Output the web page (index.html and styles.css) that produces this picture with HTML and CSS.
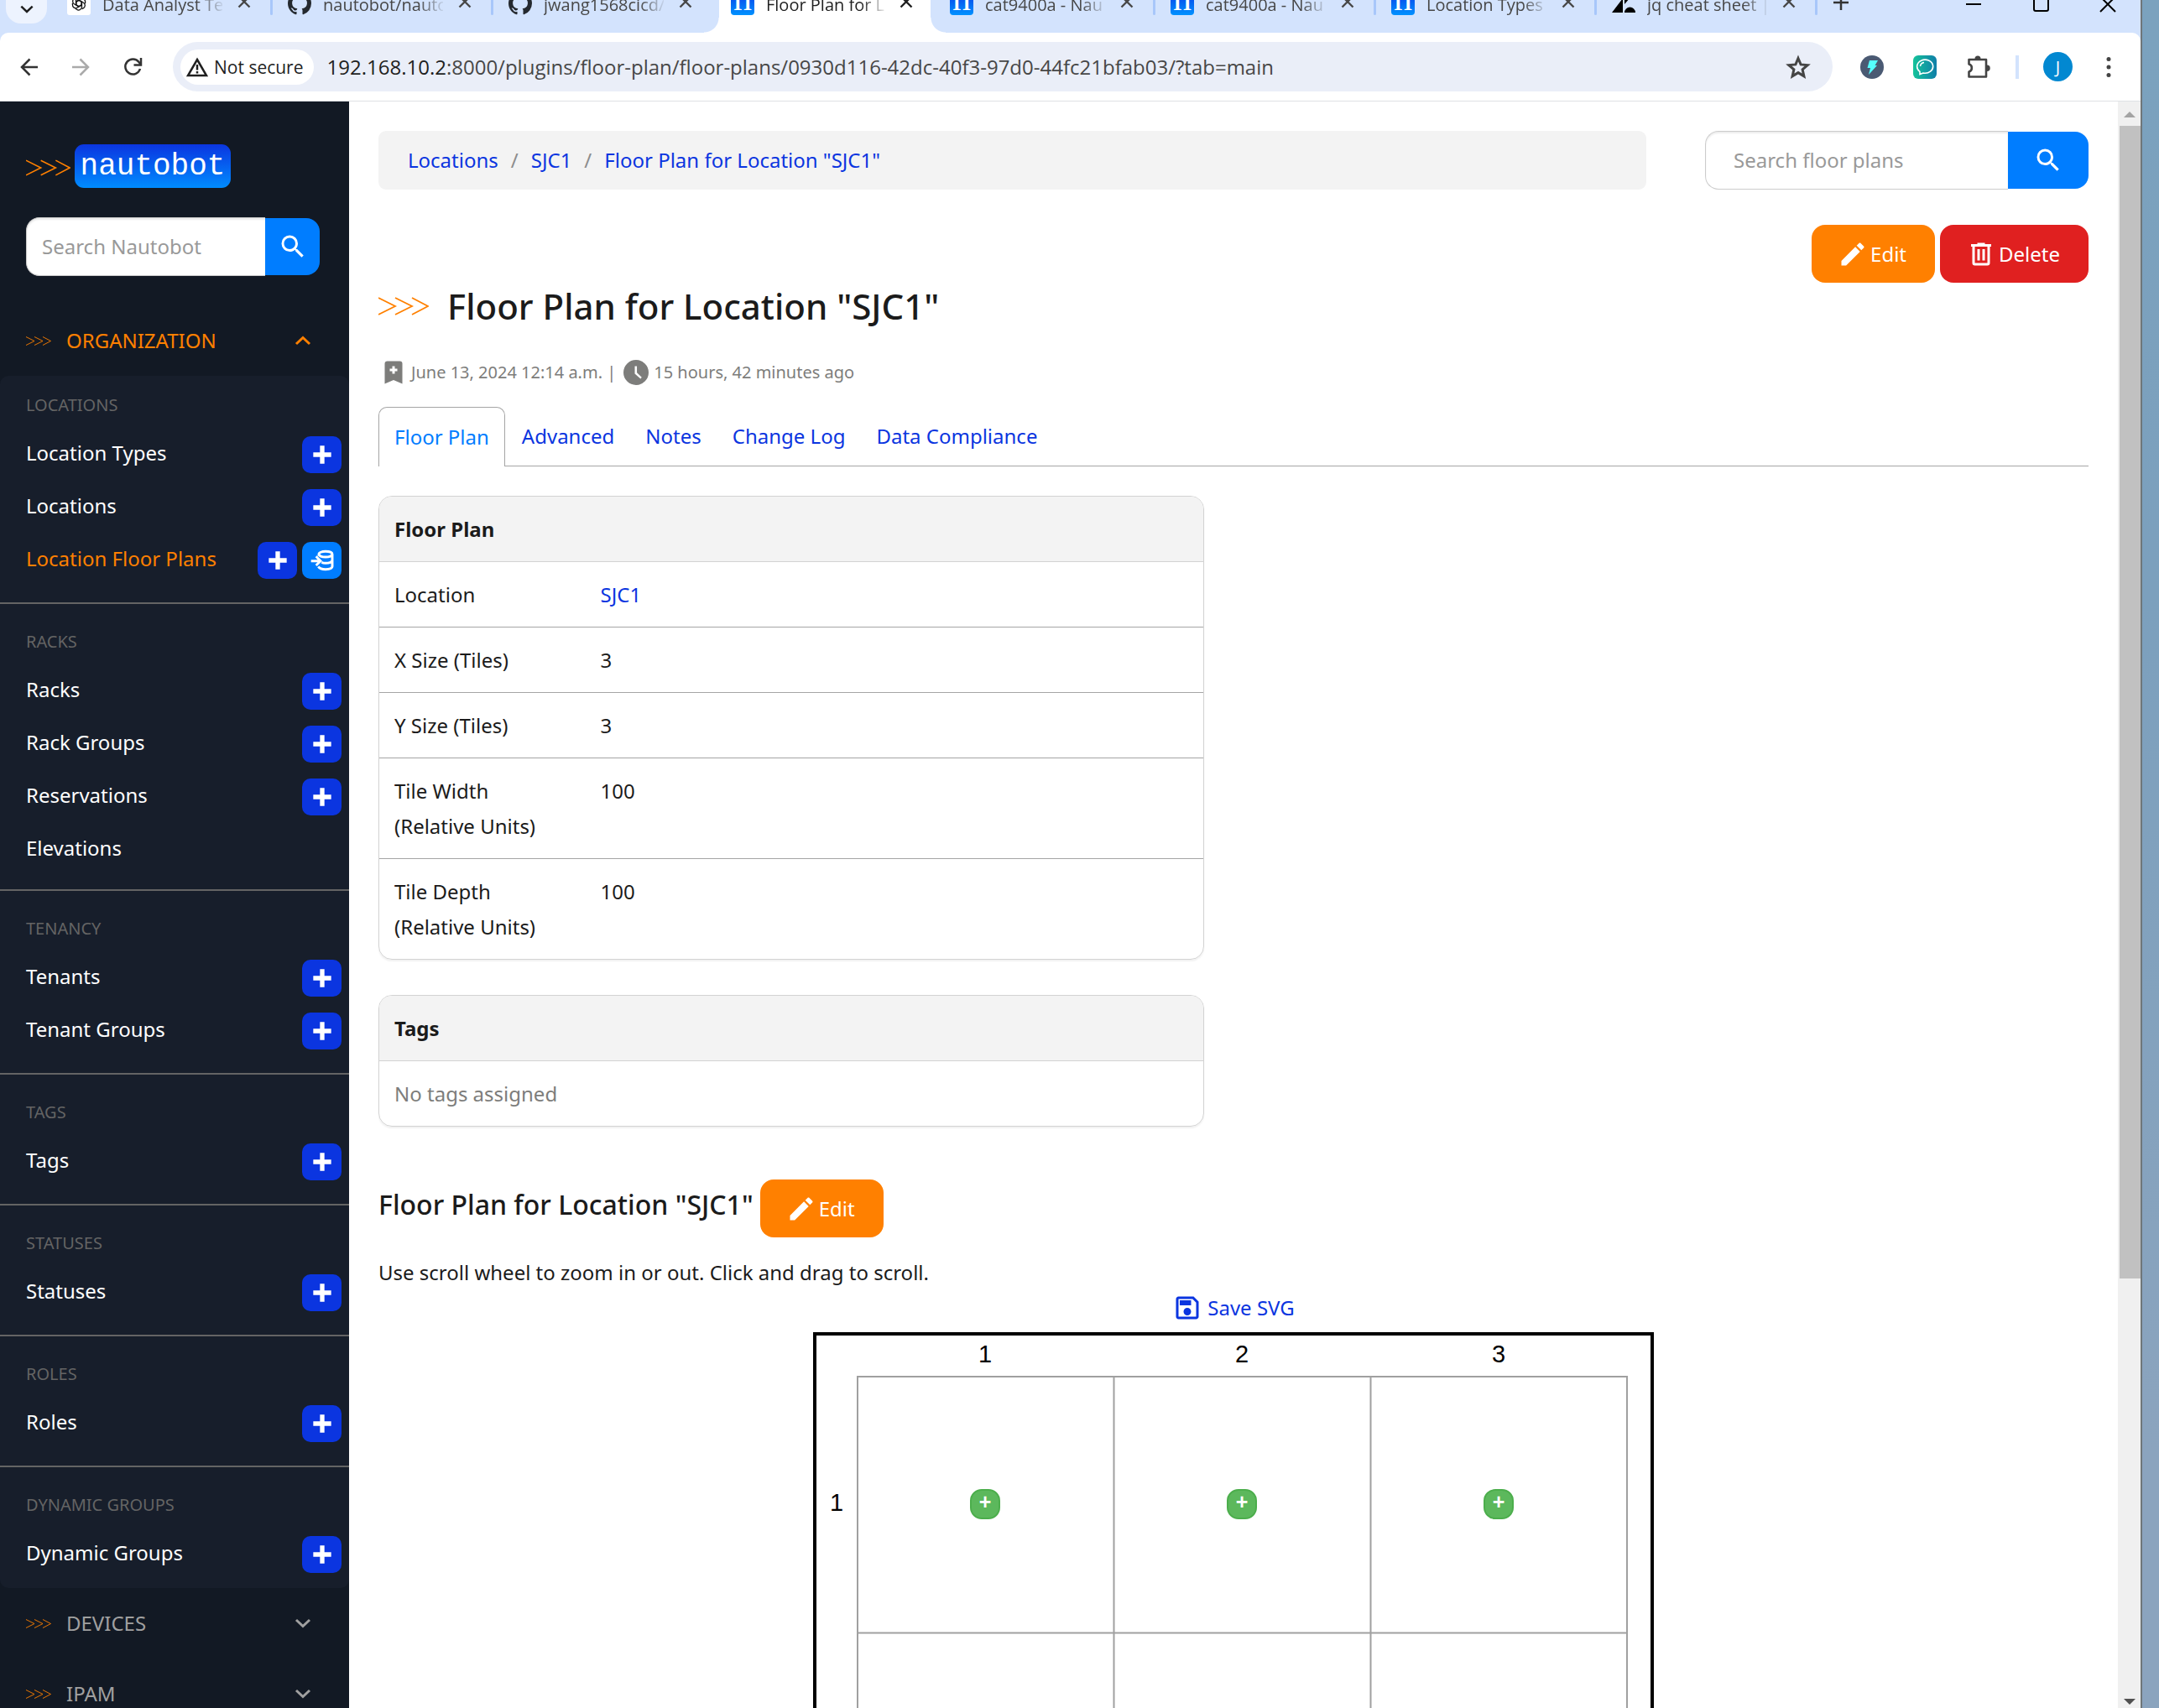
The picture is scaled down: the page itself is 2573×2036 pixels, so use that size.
FILE: index.html
```html
<!DOCTYPE html>
<html lang="en">
<head>
<meta charset="utf-8">
<title>Floor Plan for Location "SJC1" - Nautobot</title>
<meta name="viewport" content="width=device-width, initial-scale=1">
<link rel="stylesheet" href="styles.css">
</head>
<body>
<svg class="sprite" aria-hidden="true">
  <symbol id="pencil" viewBox="0 0 24 24"><path d="M20.71,7.04C21.1,6.65 21.1,6 20.71,5.63L18.37,3.29C18,2.9 17.35,2.9 16.96,3.29L15.12,5.12L18.87,8.87M3,17.25V21H6.75L17.81,9.93L14.06,6.18L3,17.25Z"/></symbol>
  <symbol id="magnify" viewBox="0 0 24 24"><path d="M9.5,3A6.5,6.5 0 0,1 16,9.5C16,11.11 15.41,12.59 14.44,13.73L14.71,14H15.5L20.5,19L19,20.5L14,15.5V14.71L13.73,14.44C12.59,15.41 11.11,16 9.5,16A6.5,6.5 0 0,1 3,9.5A6.5,6.5 0 0,1 9.5,3M9.5,5C7,5 5,7 5,9.5C5,12 7,14 9.5,14C12,14 14,12 14,9.5C14,7 12,5 9.5,5Z"/></symbol>
  <symbol id="trash" viewBox="0 0 24 24"><path d="M9,3V4H4V6H5V19A2,2 0 0,0 7,21H17A2,2 0 0,0 19,19V6H20V4H15V3H9M7,6H17V19H7V6M9,8V17H11V8H9M13,8V17H15V8H13Z"/></symbol>
  <symbol id="plus" viewBox="0 0 24 24"><path d="M20 14H14V20H10V14H4V10H10V4H14V10H20V14Z"/></symbol>
  <symbol id="import" viewBox="0 0 24 24"><path fill="none" stroke="currentColor" stroke-width="2.200" d="M9 8V6.5C9 5 11.500 4 15 4S21 5 21 6.500V17.500C21 19 18.500 20 15 20S9.500 19 8.500 17.500M9 6.500C9.500 8 12 9 15 9S20.500 8 21 6.500M11.500 13.700C12.500 14.300 13.700 14.500 15 14.500C18 14.500 20.500 13.500 21 12M2 12.500H10M6.500 8.500L10.500 12.500L6.500 16.500"/></symbol>
  <symbol id="bookmark" viewBox="0 0 24 24"><path d="M17,3A2,2 0 0,1 19,5V21L12,18L5,21V5C5,3.89 5.9,3 7,3H17M11,7V9H9V11H11V13H13V11H15V9H13V7H11Z"/></symbol>
  <symbol id="clock" viewBox="0 0 24 24"><path d="M12,2A10,10 0 0,0 2,12A10,10 0 0,0 12,22A10,10 0 0,0 22,12A10,10 0 0,0 12,2M15.600,17L11,13V7H12.700V12.200L16.500,15.800L15.600,17Z"/></symbol>
  <symbol id="save" viewBox="0 0 24 24"><path d="M17 3H5C3.890 3 3 3.900 3 5V19C3 20.100 3.890 21 5 21H19C20.100 21 21 20.100 21 19V7L17 3M19 19H5V5H16.170L19 7.830V19M12 12C10.340 12 9 13.340 9 15S10.340 18 12 18 15 16.660 15 15 13.660 12 12 12M6 6H15V10H6V6Z"/></symbol>
  <symbol id="up" viewBox="0 0 24 24"><path fill="none" stroke="currentColor" stroke-width="3" d="M4 16L12 8.500L20 16"/></symbol>
  <symbol id="down" viewBox="0 0 24 24"><path fill="none" stroke="currentColor" stroke-width="3" d="M4 8L12 15.500L20 8"/></symbol>
  <symbol id="x" viewBox="0 0 16 16"><path fill="none" stroke="currentColor" stroke-width="2.400" d="M1.500 1.500L14.500 14.500M14.500 1.500L1.500 14.500"/></symbol>
  <symbol id="github" viewBox="0 0 16 16"><path d="M8 0C3.580 0 0 3.580 0 8c0 3.540 2.290 6.530 5.470 7.590.4.070.55-.17.55-.38 0-.19-.01-.82-.01-1.490-2.010.37-2.530-.49-2.690-.94-.09-.23-.48-.94-.82-1.130-.28-.15-.68-.52-.01-.53.63-.01 1.080.58 1.230.82.72 1.210 1.870.87 2.330.66.07-.52.28-.87.51-1.070-1.780-.2-3.640-.89-3.640-3.950 0-.87.31-1.590.82-2.150-.08-.2-.36-1.020.08-2.120 0 0 .67-.21 2.200.82.64-.18 1.320-.27 2-.27s1.360.09 2 .27c1.530-1.040 2.200-.82 2.200-.82.44 1.100.16 1.920.08 2.120.51.56.82 1.270.82 2.150 0 3.070-1.870 3.750-3.650 3.950.29.25.54.73.54 1.480 0 1.070-.01 1.930-.01 2.200 0 .21.15.46.55.38A8.010 8.010 0 0016 8c0-4.420-3.580-8-8-8z"/></symbol>
  <symbol id="knot" viewBox="0 0 28 28">
    <rect width="28" height="28" rx="3" fill="#fff"/>
    <g fill="none" stroke="#111" stroke-width="1.300">
      <g id="petal"><path d="M14 10.500L17.500 12.500V18A3.800 3.800 0 0 1 11.500 21.300L10 20.400"/></g>
      <use href="#petal" transform="rotate(60 14 14)"/><use href="#petal" transform="rotate(120 14 14)"/><use href="#petal" transform="rotate(180 14 14)"/><use href="#petal" transform="rotate(240 14 14)"/><use href="#petal" transform="rotate(300 14 14)"/>
    </g>
  </symbol>
  <symbol id="zendesk" viewBox="0 0 28 28"><path fill="#000" d="M13 8V25H0ZM13 0A6.500 6.500 0 0 1 0 0ZM15 25A6.500 6.500 0 0 1 28 25ZM15 15V0H28Z"/></symbol>
  <symbol id="arrows" viewBox="0 0 60 22"><path fill="none" stroke="#ff8000" stroke-width="1.800" d="M0 1L20 11L0 21M20 1L40 11L20 21M40 1L59 11L40 21"/></symbol>
</svg>

<div class="desktop">
<div class="window">
  <header class="strip">
    <button class="tab-search" aria-label="Search tabs"><svg class="i20"><use href="#down"/></svg></button>
    <div class="tabs">
      <div class="tab"><svg class="i28"><use href="#knot"/></svg><span class="tab-title">Data Analyst Te</span><button class="close" aria-label="Close"><svg class="i16"><use href="#x"/></svg></button></div>
      <div class="tab"><svg class="i28 gh"><use href="#github"/></svg><span class="tab-title">nautobot/nauto</span><button class="close" aria-label="Close"><svg class="i16"><use href="#x"/></svg></button></div>
      <div class="tab before-active"><svg class="i28 gh"><use href="#github"/></svg><span class="tab-title">jwang1568cicd/</span><button class="close" aria-label="Close"><svg class="i16"><use href="#x"/></svg></button></div>
      <div class="tab active"><span class="fav">n</span><span class="tab-title">Floor Plan for L</span><button class="close" aria-label="Close"><svg class="i16"><use href="#x"/></svg></button></div>
      <div class="tab"><span class="fav">n</span><span class="tab-title">cat9400a - Nau</span><button class="close" aria-label="Close"><svg class="i16"><use href="#x"/></svg></button></div>
      <div class="tab"><span class="fav">n</span><span class="tab-title">cat9400a - Nau</span><button class="close" aria-label="Close"><svg class="i16"><use href="#x"/></svg></button></div>
      <div class="tab"><span class="fav">n</span><span class="tab-title">Location Types</span><button class="close" aria-label="Close"><svg class="i16"><use href="#x"/></svg></button></div>
      <div class="tab"><svg class="i28"><use href="#zendesk"/></svg><span class="tab-title">jq cheat sheet |</span><button class="close" aria-label="Close"><svg class="i16"><use href="#x"/></svg></button></div>
    </div>
    <button class="new-tab" aria-label="New tab"><svg class="i20" viewBox="0 0 20 20"><path fill="none" stroke="#333" stroke-width="2.500" d="M10 1V19M1 10H19"/></svg></button>
    <div class="controls">
      <button aria-label="Minimize"><svg class="i20" viewBox="0 0 20 20"><path stroke="#000" stroke-width="2" d="M1 10H19"/></svg></button>
      <button aria-label="Maximize"><svg class="i20" viewBox="0 0 20 20"><rect x="2" y="1" width="17" height="17" rx="2" fill="none" stroke="#000" stroke-width="2"/></svg></button>
      <button aria-label="Close window"><svg class="i20" viewBox="0 0 20 20"><path stroke="#000" stroke-width="2" d="M1 1L19 19M19 1L1 19"/></svg></button>
    </div>
  </header>

  <div class="toolbar-wrap">
  <div class="toolbar">
    <button class="tool" aria-label="Back"><svg class="i24" viewBox="0 0 24 24"><path fill="none" stroke="#333" stroke-width="2.500" d="M22 12H3M12.500 2.500L3 12L12.500 21.500"/></svg></button>
    <button class="tool" aria-label="Forward" disabled><svg class="i24" viewBox="0 0 24 24"><path fill="none" stroke="#aaa" stroke-width="2.500" d="M1 12H20M10.500 2.500L20 12L10.500 21.500"/></svg></button>
    <button class="tool" aria-label="Reload"><svg class="i24" viewBox="0 0 24 24"><path fill="none" stroke="#333" stroke-width="2.500" d="M20 14A9 9 0 1 1 18.500 6L21 9M21 1V9.500H12.500"/></svg></button>
    <div class="address">
      <button class="secure"><svg class="i26" viewBox="0 0 26 26"><path fill="none" stroke="#1f1f1f" stroke-width="2.500" d="M13 4L24 23H2ZM13 10V16.500M13 18V20.500"/></svg>Not secure</button>
      <span class="url"><span class="host">192.168.10.2</span>:8000/plugins/floor-plan/floor-plans/0930d116-42dc-40f3-97d0-44fc21bfab03/?tab=main</span>
      <button class="star" aria-label="Bookmark"><svg class="i30" viewBox="0 0 30 30"><path fill="none" stroke="#444" stroke-width="3" d="M15 4.500L18.100 11.900L26.200 12.600L20.100 17.900L21.900 25.800L15 21.600L8.100 25.800L9.900 17.900L3.800 12.600L11.900 11.900Z"/></svg></button>
    </div>
    <div class="extensions">
      <svg class="i28" viewBox="0 0 28 28"><circle cx="14" cy="14" r="14" fill="#4a5a73"/><path fill="#5ff" d="M11 6H21L17.500 12H20L10 23L12 15H8.500Z"/></svg>
      <svg class="i28" viewBox="0 0 28 28"><defs><linearGradient id="chatbg"><stop stop-color="#15c39a"/><stop offset="1" stop-color="#0f7ea8"/></linearGradient></defs><rect width="28" height="28" rx="6" fill="url(#chatbg)"/><path fill="none" stroke="#fff" stroke-width="1.600" d="M8 22.500V19.300A9.500 8 0 1 1 12 21ZM8.500 13A5.500 5 0 0 1 13 8.500"/></svg>
      <svg class="i30" viewBox="0 0 30 30"><path fill="none" stroke="#444" stroke-width="2.600" stroke-linejoin="round" d="M3.500 6H24V26.500H3.500V20.500C8 19.500 8 12.500 3.500 11.500Z"/><path fill="#444" d="M10.500 5A3.500 3.500 0 0 1 17.500 5ZM25 12.500A3.500 3.500 0 0 1 25 20Z"/></svg>
      <span class="rule"></span>
      <span class="avatar">J</span>
      <button class="more" aria-label="Menu"><svg class="i24" viewBox="0 0 24 24"><circle cx="12" cy="2.500" r="2.500"/><circle cx="12" cy="12" r="2.500"/><circle cx="12" cy="21.500" r="2.500"/></svg></button>
    </div>
  </div>
  </div>

  <div class="page">
    <nav class="sidebar">
      <a class="logo" href="#"><svg class="logo-arrows"><use href="#arrows"/></svg><span class="logo-name">nautobot</span></a>
      <form class="search side-search"><input type="text" placeholder="Search Nautobot" aria-label="Search Nautobot"><button type="button" aria-label="Search"><svg class="i36"><use href="#magnify"/></svg></button></form>
      <button class="section open"><svg class="mini"><use href="#arrows"/></svg><span>ORGANIZATION</span><svg class="i24"><use href="#up"/></svg></button>
      <div class="submenu">
        <section class="group"><h2>LOCATIONS</h2>
          <ul>
            <li><a href="#">Location Types</a><button class="add" aria-label="Add"><svg class="i32"><use href="#plus"/></svg></button></li>
            <li><a href="#">Locations</a><button class="add" aria-label="Add"><svg class="i32"><use href="#plus"/></svg></button></li>
            <li><a class="current" href="#">Location Floor Plans</a><button class="add" aria-label="Add"><svg class="i32"><use href="#plus"/></svg></button><button class="add load" aria-label="Import"><svg class="i32"><use href="#import"/></svg></button></li>
          </ul></section>
        <section class="group"><h2>RACKS</h2>
          <ul>
            <li><a href="#">Racks</a><button class="add" aria-label="Add"><svg class="i32"><use href="#plus"/></svg></button></li>
            <li><a href="#">Rack Groups</a><button class="add" aria-label="Add"><svg class="i32"><use href="#plus"/></svg></button></li>
            <li><a href="#">Reservations</a><button class="add" aria-label="Add"><svg class="i32"><use href="#plus"/></svg></button></li>
            <li><a href="#">Elevations</a></li>
          </ul></section>
        <section class="group"><h2>TENANCY</h2>
          <ul>
            <li><a href="#">Tenants</a><button class="add" aria-label="Add"><svg class="i32"><use href="#plus"/></svg></button></li>
            <li><a href="#">Tenant Groups</a><button class="add" aria-label="Add"><svg class="i32"><use href="#plus"/></svg></button></li>
          </ul></section>
        <section class="group"><h2>TAGS</h2>
          <ul><li><a href="#">Tags</a><button class="add" aria-label="Add"><svg class="i32"><use href="#plus"/></svg></button></li></ul></section>
        <section class="group"><h2>STATUSES</h2>
          <ul><li><a href="#">Statuses</a><button class="add" aria-label="Add"><svg class="i32"><use href="#plus"/></svg></button></li></ul></section>
        <section class="group"><h2>ROLES</h2>
          <ul><li><a href="#">Roles</a><button class="add" aria-label="Add"><svg class="i32"><use href="#plus"/></svg></button></li></ul></section>
        <section class="group"><h2>DYNAMIC GROUPS</h2>
          <ul><li><a href="#">Dynamic Groups</a><button class="add" aria-label="Add"><svg class="i32"><use href="#plus"/></svg></button></li></ul></section>
      </div>
      <button class="section"><svg class="mini"><use href="#arrows"/></svg><span>DEVICES</span><svg class="i24"><use href="#down"/></svg></button>
      <button class="section"><svg class="mini"><use href="#arrows"/></svg><span>IPAM</span><svg class="i24"><use href="#down"/></svg></button>
    </nav>

    <main class="content">
      <div class="top">
        <nav class="crumbs" aria-label="Breadcrumb"><a href="#">Locations</a><span>/</span><a href="#">SJC1</a><span>/</span><a href="#">Floor Plan for Location "SJC1"</a></nav>
        <form class="search main-search"><input type="text" placeholder="Search floor plans" aria-label="Search floor plans"><button type="button" aria-label="Search"><svg class="i36"><use href="#magnify"/></svg></button></form>
      </div>
      <div class="actions">
        <button class="btn edit"><svg class="i36"><use href="#pencil"/></svg>Edit</button>
        <button class="btn delete"><svg class="i36"><use href="#trash"/></svg>Delete</button>
      </div>
      <h1><svg class="title-arrows"><use href="#arrows"/></svg>Floor Plan for Location "SJC1"</h1>
      <p class="meta"><svg class="i36"><use href="#bookmark"/></svg><span>June 13, 2024 12:14 a.m. |</span><svg class="i36"><use href="#clock"/></svg><span>15 hours, 42 minutes ago</span></p>
      <nav class="page-tabs"><a class="selected" href="#">Floor Plan</a><a href="#">Advanced</a><a href="#">Notes</a><a href="#">Change Log</a><a href="#">Data Compliance</a></nav>

      <section class="panel">
        <h2>Floor Plan</h2>
        <table>
          <tr><th scope="row">Location</th><td><a href="#">SJC1</a></td></tr>
          <tr><th scope="row">X Size (Tiles)</th><td>3</td></tr>
          <tr><th scope="row">Y Size (Tiles)</th><td>3</td></tr>
          <tr><th scope="row">Tile Width<br>(Relative Units)</th><td>100</td></tr>
          <tr><th scope="row">Tile Depth<br>(Relative Units)</th><td>100</td></tr>
        </table>
      </section>
      <section class="panel">
        <h2>Tags</h2>
        <p class="empty">No tags assigned</p>
      </section>

      <div class="plan-head"><h2>Floor Plan for Location "SJC1"</h2><button class="btn edit"><svg class="i36"><use href="#pencil"/></svg>Edit</button></div>
      <p class="hint">Use scroll wheel to zoom in or out. Click and drag to scroll.</p>
      <a class="save" href="#"><svg class="i36"><use href="#save"/></svg>Save SVG</a>
      <svg class="plan" viewBox="0 0 1002 1002">
        <rect x="2" y="2" width="998" height="998" fill="#fff" stroke="#000" stroke-width="4"/>
        <path class="grid" d="M53 53H970V970H53ZM358.500 53V970M664.500 53V970M53 358.500H970M53 664.500H970"/>
        <g class="axis"><text x="205" y="36">1</text><text x="511" y="36">2</text><text x="817" y="36">3</text><text x="28" y="213">1</text><text x="28" y="519">2</text><text x="28" y="825">3</text></g>
        <g class="tile">
          <rect x="188" y="188" width="34" height="34" rx="13"/><text x="205" y="211">+</text>
          <rect x="494" y="188" width="34" height="34" rx="13"/><text x="511" y="211">+</text>
          <rect x="800" y="188" width="34" height="34" rx="13"/><text x="817" y="211">+</text>
        </g>
      </svg>
    </main>

    <div class="scrollbar" aria-hidden="true">
      <svg viewBox="0 0 26 29"><path fill="#a3a3a3" d="M6 19H20L13 12Z"/></svg>
      <div class="thumb-track"><div class="thumb"></div></div>
      <svg viewBox="0 0 26 29"><path fill="#505050" d="M6 18H20L13 25Z"/></svg>
    </div>
  </div>
</div>
</div>
</body>
</html>
```
FILE: styles.css
```css
* { box-sizing: border-box; }
body, h1, h2, p, ul { margin: 0; padding: 0; }
body { font-family: "Noto Sans", sans-serif; font-size: 24px; line-height: 42px; color: #1b1b1b; }
button { font: inherit; color: inherit; border: 0; padding: 0; margin: 0; background: none; }
a { color: #0b35e0; text-decoration: none; }
ul { list-style: none; }
svg { display: block; flex: none; fill: currentColor; }
.sprite { position: absolute; width: 0; height: 0; }
.i16 { width: 16px; height: 16px; }
.i20 { width: 20px; height: 20px; }
.i24 { width: 24px; height: 24px; }
.i26 { width: 26px; height: 26px; }
.i28 { width: 28px; height: 28px; }
.i30 { width: 30px; height: 30px; }
.i32 { width: 32px; height: 32px; }
.i36 { width: 36px; height: 36px; }

.desktop { height: 100vh; padding-right: 20px; background: linear-gradient(#7ba2be, #7ca0bd 35%, #8ba4be 85%); overflow: hidden; }
.window { height: 100%; display: flex; flex-direction: column; background: #fff; border-right: 2px solid #6f7679; overflow: hidden; }

/* Browser tab strip */
.strip { flex: none; height: 39px; display: flex; align-items: flex-end; background: #d3e3fd; overflow: hidden; font-family: "Open Sans", sans-serif; font-size: 20px; line-height: 28px; color: #474747; }
.tab-search { width: 49px; height: 48px; margin: 0 6px 11px 7px; padding-top: 14px; border-radius: 18px; background: #edf3fe; display: flex; justify-content: center; align-items: center; color: #1f1f1f; }
.tabs { display: flex; }
.tab { width: 263px; height: 60px; padding: 11px 22px 0 18px; display: flex; align-items: flex-start; position: relative; }
.tab:not(.active):not(.before-active)::after { content: ""; position: absolute; right: 0; bottom: 21px; width: 3px; height: 28px; background: #a8c7fa; border-radius: 2px; }
.tab-title { flex: 1; margin: 2px 18px 0 14px; overflow: hidden; white-space: nowrap; mask-image: linear-gradient(90deg, #000 80%, rgba(0,0,0,.1)); }
.tab .close { padding: 4px 4px 0 0; }
.gh { color: #24292f; }
.tab.active { background: #fff; color: #1f1f1f; z-index: 1; margin: 0 5px 0 6px; width: 252px; padding: 11px 17px 0 14px; }
.tab.active::before, .tab.active::after { content: ""; position: absolute; bottom: 0; width: 18px; height: 18px; }
.tab.active::before { left: -18px; background: radial-gradient(circle at 0 0, #d3e3fd 17px, #fff 18px); }
.tab.active::after { right: -18px; background: radial-gradient(circle at 100% 0, #d3e3fd 17px, #fff 18px); }
.fav { width: 28px; height: 28px; border-radius: 4px; background: linear-gradient(#0a3be6, #0092ff); color: #fff; font-family: "Liberation Serif", serif; font-size: 44px; line-height: 16px; text-align: center; }
.new-tab { margin: 0 0 26px 18px; }
.controls { margin-left: auto; display: flex; gap: 60px; padding: 0 29px 24px 0; }

/* Browser toolbar */
.toolbar-wrap { flex: none; background: #d3e3fd; }
.toolbar { height: 82px; display: flex; align-items: center; background: #fff; border-radius: 10px 10px 0 0; border-bottom: 1px solid #dfe1e5; padding: 0 26px 0 23px; font-family: "Open Sans", sans-serif; }
.tool { width: 24px; height: 24px; margin-right: 38px; }
.tool:nth-child(3) { margin-right: 35px; }
.address { flex: 1; height: 59px; border-radius: 30px; background: #eaeef8; display: flex; align-items: center; padding: 0 26px 0 9px; }
.secure { flex: none; display: flex; align-items: center; gap: 7px; height: 42px; padding: 0 12px 0 7px; border-radius: 21px; background: #fff; color: #1f1f1f; font-size: 21px; }
.url { flex: 1; margin-left: 16px; font-size: 24px; color: #474747; white-space: nowrap; }
.host { color: #1f1f1f; }
.extensions { display: flex; align-items: center; gap: 35px; margin-left: 33px; }
.rule { width: 4px; height: 28px; margin-left: -6px; background: #d3e3fd; }
.avatar { width: 35px; height: 35px; margin: 0 -4px 0 -6px; border-radius: 50%; background: #0288d1; color: #fff; text-align: center; line-height: 35px; font-size: 20px; }
.more { color: #444; }

/* Page frame */
.page { flex: 1; min-height: 0; display: flex; }
.sidebar { flex: none; width: 416px; background: #121924; overflow: hidden; }
.logo { display: flex; align-items: center; gap: 5px; padding: 51px 0 35px 31px; }
.logo-arrows { width: 53px; height: 22px; margin-top: 4px; }
.logo-name { width: 186px; height: 52px; border-radius: 11px; background: linear-gradient(#0b35e0, #008cff); color: #fff; font: 36px/54px "Liberation Mono", monospace; text-align: center; }
.search { display: flex; height: 70px; }
.search input { flex: 1; min-width: 0; font: inherit; color: #1b1b1b; background: #fff; border: 1px solid #ccc; border-right: 0; border-radius: 16px 0 0 16px; padding: 0 18px; box-shadow: inset 0 2px 2px rgba(0,0,0,.08); }
.search input::placeholder { color: #999; opacity: 1; }
.search button { display: flex; align-items: center; justify-content: center; margin: 1px 0; border-radius: 0 16px 16px 0; background: #007dff; color: #fff; }
.side-search { margin: 0 35px 35px 31px; }
.side-search button { width: 65px; }
.section { width: 100%; height: 84px; padding: 0 43px 0 31px; display: flex; align-items: center; color: #a0a0a0; text-align: left; }
.section span { flex: 1; margin-left: 18px; }
.section.open { color: #ff8000; }
.mini { width: 30px; height: 11px; }
.submenu { background: #171e2b; border-radius: 10px; }
.group { padding: 0 9px 28px 31px; }
.group + .group { border-top: 2px solid #646464; padding-top: 10px; }
.group:last-child { padding-bottom: 18px; }
.group h2 { height: 72px; line-height: 70px; font-size: 20px; font-weight: 400; color: #646464; }
.group ul { display: grid; gap: 19px; }
.group li { display: flex; align-items: flex-start; gap: 6px; min-height: 41px; line-height: 39px; }
.group a { flex: 1; color: #fff; }
.group a.current { color: #ff8000; }
.add { width: 47px; height: 44px; border-radius: 10px; background: #0b35e0; color: #fff; display: flex; align-items: center; justify-content: center; }
.add.load { background: #007dff; }

/* Main column */
.content { flex: 1; min-width: 0; padding: 35px; overflow: hidden; }
.top { display: flex; gap: 70px; }
.crumbs { flex: 1; height: 70px; padding: 0 35px; border-radius: 9px; background: #f3f3f3; line-height: 70px; }
.crumbs span { margin: 0 15px; color: #8d8d8d; }
.main-search { width: 457px; }
.main-search input { padding: 0 33px; }
.main-search button { width: 96px; }
.actions { display: flex; justify-content: flex-end; gap: 6px; margin-top: 42px; }
.btn { height: 69px; padding: 0 34px 0 31px; border-radius: 16px; color: #fff; display: flex; align-items: center; gap: 3px; }
.edit { background: #ff8000; }
.delete { background: #e02020; }
h1 { display: flex; align-items: center; gap: 22px; font-size: 42px; line-height: 56px; font-weight: 500; }
.title-arrows { width: 60px; height: 22px; }
.meta { display: flex; align-items: center; height: 42px; margin: 30px 0 20px; color: #7d7d7b; font-size: 20px; }
.meta span { margin: 0 6px 0 3px; }
.page-tabs { display: flex; gap: 3px; height: 71px; border-bottom: 1px solid #a5a5a5; line-height: 70px; }
.page-tabs a { padding: 0 17px; }
.page-tabs .selected { height: 71px; padding: 0 18px; border: 1px solid #a5a5a5; border-bottom: 0; border-radius: 10px 10px 0 0; background: #fff; color: #007dff; }
.panel { width: 984px; max-width: 100%; margin-top: 35px; border: 1px solid #d3d3d3; border-radius: 16px; box-shadow: 0 2px 2px rgba(0,0,0,.06); overflow: hidden; }
.panel + .panel { margin-top: 42px; }
.panel h2 { height: 78px; padding: 18px; font-size: 24px; line-height: 42px; font-weight: 700; background: #f3f3f3; border-bottom: 1px solid #d3d3d3; }
.panel table { width: 100%; border-collapse: collapse; table-layout: fixed; }
.panel tr + tr { border-top: 1px solid #a5a5a5; }
.panel th, .panel td { padding: 18px 18px 17px; vertical-align: top; text-align: left; font-weight: 400; }
.panel th { width: 25%; padding-right: 0; white-space: nowrap; }
.empty { padding: 18px; height: 77px; color: #7d7d7b; }
.plan-head { display: flex; align-items: center; gap: 8px; margin-top: 63px; }
.plan-head h2 { font-size: 32px; line-height: 60px; font-weight: 500; padding-bottom: 9px; }
.hint { margin-top: 21px; }
.save { display: flex; align-items: center; justify-content: center; gap: 6px; }
.plan { width: 1002px; max-width: 100%; margin: 8px auto 0; }
.grid { fill: none; stroke: #a0a0a0; stroke-width: 2; }
.axis text { font: 29px "Liberation Sans", sans-serif; fill: #000; text-anchor: middle; }
.tile rect { fill: #5cb85c; stroke: #4cae4c; stroke-width: 2; }
.tile text { font: bold 25px "Liberation Sans", sans-serif; fill: #fff; text-anchor: middle; }

/* Scrollbar */
.scrollbar { flex: none; width: 27px; padding-left: 1px; background: #f0f0f0; display: flex; flex-direction: column; }
.scrollbar svg { height: 29px; }
.thumb-track { flex: 1; padding-left: 1px; }
.thumb { height: 74%; background: #c1c1c1; }
```
